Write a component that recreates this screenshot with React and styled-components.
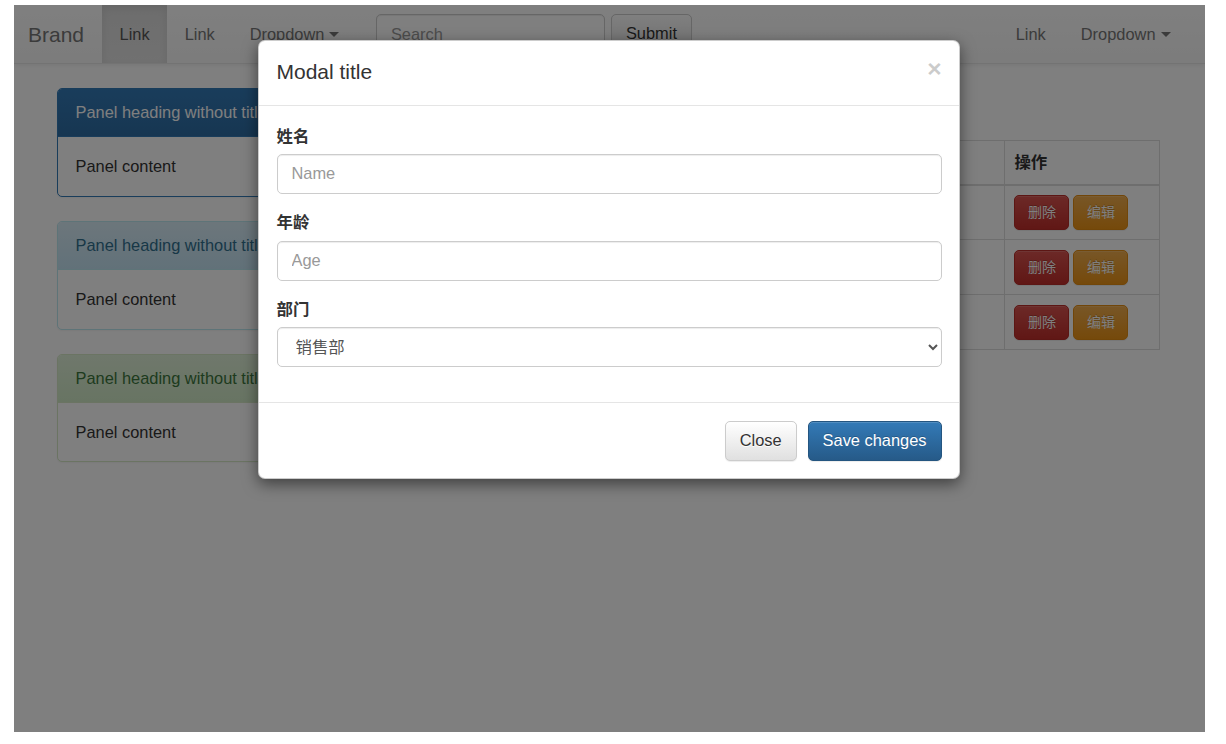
import React from 'react';
import styled, { createGlobalStyle, css } from 'styled-components';

const GlobalStyle = createGlobalStyle`
    html, body {
        margin: 0;
        padding: 0;
        background: #fff;
    }
    body {
        font-family: "Liberation Sans", "Noto Sans CJK SC", Arial, sans-serif;
        font-size: 16.4px;
        line-height: 23.4px;
        color: #333;
    }
    * {
        box-sizing: border-box;
    }
`;

const Screen = styled.div`
    position: relative;
    margin: 5px 0 0 14px;
    width: 1191px;
    height: 727px;
    overflow: hidden;
    background: #fff;
`;

const Navbar = styled.nav`
    display: flex;
    align-items: stretch;
    height: 59px;
    padding: 1px 17px 0 0;
    background-image: linear-gradient(to bottom, #fff 0, #f8f8f8 100%);
    border-bottom: 1px solid #e7e7e7;
    box-shadow: inset 0 1px 0 rgba(255, 255, 255, .15), 0 1px 5px rgba(0, 0, 0, .075);
`;

const Brand = styled.a`
    display: flex;
    align-items: center;
    padding: 0 18px 0 14px;
    font-size: 21px;
    color: #777;
    text-decoration: none;
`;

const NavList = styled.ul`
    display: flex;
    margin: -1px 0 0;
    padding: 0;
    list-style: none;
    ${props => props.right && css`
        margin-left: auto;
    `}
`;

const NavItem = styled.li`
    display: flex;
    align-items: center;
    padding: 1px 17.5px 0;
    color: #777;
    ${props => props.active && css`
        color: #555;
        background-image: linear-gradient(to bottom, #dbdbdb 0, #e2e2e2 100%);
        box-shadow: inset 0 3px 9px rgba(0, 0, 0, .075);
    `}
`;

const Caret = styled.span`
    display: inline-block;
    margin-left: 5px;
    border-top: 5px solid #777;
    border-left: 5px solid transparent;
    border-right: 5px solid transparent;
`;

const NavForm = styled.form`
    display: flex;
    align-items: flex-start;
    gap: 6px;
    margin-left: 19px;
    padding-top: 8px;
`;

const FormControl = styled.input`
    display: block;
    width: ${props => props.width || '100%'};
    height: 40px;
    padding: 7px 14px;
    font-family: inherit;
    font-size: 16.4px;
    line-height: 23.4px;
    color: #555;
    background: #fff;
    border: 1px solid #ccc;
    border-radius: 5px;
    box-shadow: inset 0 1px 1px rgba(0, 0, 0, .075);

    &::placeholder {
        color: #999;
    }
`;

const btnTones = {
    default: { from: '#fff', to: '#e0e0e0', border: '#ccc', color: '#333', shadow: '0 1px 0 #fff' },
    primary: { from: '#337ab7', to: '#265a88', border: '#245580', color: '#fff', shadow: '0 -1px 0 rgba(0,0,0,.2)' },
    danger: { from: '#d9534f', to: '#c12e2a', border: '#b92c28', color: '#fff', shadow: '0 -1px 0 rgba(0,0,0,.2)' },
    warning: { from: '#f0ad4e', to: '#eb9316', border: '#e38d13', color: '#fff', shadow: '0 -1px 0 rgba(0,0,0,.2)' },
};

const Btn = styled.button`
    display: inline-flex;
    align-items: center;
    justify-content: center;
    font-family: inherit;
    border-radius: 5px;
    cursor: pointer;
    white-space: nowrap;
    background-image: linear-gradient(to bottom, ${p => btnTones[p.tone].from} 0, ${p => btnTones[p.tone].to} 100%);
    border: 1px solid ${p => btnTones[p.tone].border};
    color: ${p => btnTones[p.tone].color};
    text-shadow: ${p => btnTones[p.tone].shadow};
    box-shadow: inset 0 1px 0 rgba(255, 255, 255, .15), 0 1px 1px rgba(0, 0, 0, .075);
    ${p => p.small ? css`
        padding: 6px 12.5px;
        font-size: 14px;
        line-height: 21px;
    ` : css`
        padding: 7px 14px;
        font-size: 16.4px;
        line-height: 23.4px;
    `}
`;

const Content = styled.main`
    display: flex;
    align-items: flex-start;
    padding: 24px 45px 0 43px;
`;

const PanelColumn = styled.div`
    width: 300px;
    flex-shrink: 0;
`;

const panelTones = {
    primary: { border: '#337ab7', from: '#337ab7', to: '#2e6da4', text: '#fff' },
    info: { border: '#bce8f1', from: '#d9edf7', to: '#c4e3f3', text: '#31708f' },
    success: { border: '#d6e9c6', from: '#dff0d8', to: '#d0e9c6', text: '#3c763d' },
};

const Panel = styled.div`
    margin-bottom: 24px;
    background: #fff;
    border: 1px solid ${p => panelTones[p.tone].border};
    border-radius: 5px;
    box-shadow: 0 1px 2px rgba(0, 0, 0, .05);
    overflow: hidden;
`;

const PanelHeading = styled.div`
    padding: 12px 17.5px;
    white-space: nowrap;
    color: ${p => panelTones[p.tone].text};
    background-image: linear-gradient(to bottom, ${p => panelTones[p.tone].from} 0, ${p => panelTones[p.tone].to} 100%);
    border-bottom: 1px solid ${p => panelTones[p.tone].border};
`;

const PanelBody = styled.div`
    padding: 17.5px;
`;

const TableColumn = styled.div`
    flex: 1;
    margin-left: 40px;
`;

const Toolbar = styled.div`
    margin-bottom: 13px;
`;

const Table = styled.table`
    width: 100%;
    border-collapse: collapse;
    border: 1px solid #ddd;

    th, td {
        padding: 9.4px;
        border: 1px solid #ddd;
        text-align: left;
        vertical-align: middle;
    }

    thead th {
        border-bottom-width: 2px;
    }
`;

const ActionCell = styled.td`
    width: 155px;
    white-space: nowrap;

    & > * + * {
        margin-left: 4px;
    }
`;

const Backdrop = styled.div`
    position: absolute;
    inset: 0;
    z-index: 1;
    background: rgba(0, 0, 0, .5);
`;

const ModalLayer = styled.div`
    position: absolute;
    inset: 0;
    z-index: 2;
`;

const Dialog = styled.div`
    width: 702px;
    margin: 35px 0 0 244px;
    background: #fff;
    border: 1px solid rgba(0, 0, 0, .2);
    border-radius: 7px;
    box-shadow: 0 5px 15px rgba(0, 0, 0, .5);
`;

const ModalHeader = styled.div`
    display: flex;
    justify-content: space-between;
    align-items: flex-start;
    padding: 16px 17.5px 17.5px;
    border-bottom: 1px solid #e5e5e5;
`;

const ModalTitle = styled.h4`
    margin: 0;
    font-size: 21px;
    font-weight: 500;
    line-height: 30px;
    color: #333;
`;

const CloseX = styled.button`
    margin-top: 0;
    padding: 0;
    background: none;
    border: 0;
    font-family: inherit;
    font-size: 24.6px;
    font-weight: bold;
    line-height: 1;
    color: #000;
    opacity: .2;
    text-shadow: 0 1px 0 #fff;
`;

const ModalBody = styled.div`
    padding: 19px 17.5px 17.5px;
`;

const FormGroup = styled.div`
    margin-bottom: 17.5px;
`;

const Label = styled.label`
    display: block;
    margin-bottom: 5.85px;
    font-weight: bold;
`;

const ModalFooter = styled.div`
    display: flex;
    justify-content: flex-end;
    gap: 11px;
    padding: 18px 17.5px 17.5px;
    border-top: 1px solid #e5e5e5;
`;

const panels = ['primary', 'info', 'success'];

const people = [
    { id: 1, name: '张三', age: 28, dept: '销售部' },
    { id: 2, name: '李四', age: 32, dept: '技术部' },
    { id: 3, name: '王五', age: 25, dept: '财务部' },
];

export default function App() {
    return (
        <>
            <GlobalStyle />
            <Screen>
                <Navbar>
                    <Brand href="#">Brand</Brand>
                    <NavList>
                        <NavItem active>Link</NavItem>
                        <NavItem>Link</NavItem>
                        <NavItem>Dropdown <Caret /></NavItem>
                    </NavList>
                    <NavForm>
                        <FormControl width="229px" placeholder="Search" />
                        <Btn tone="default" type="button">Submit</Btn>
                    </NavForm>
                    <NavList right>
                        <NavItem>Link</NavItem>
                        <NavItem>Dropdown <Caret /></NavItem>
                    </NavList>
                </Navbar>

                <Content>
                    <PanelColumn>
                        {panels.map(tone => (
                            <Panel key={tone} tone={tone}>
                                <PanelHeading tone={tone}>Panel heading without title</PanelHeading>
                                <PanelBody>Panel content</PanelBody>
                            </Panel>
                        ))}
                    </PanelColumn>
                    <TableColumn>
                        <Toolbar>
                            <Btn tone="primary" type="button">添加</Btn>
                        </Toolbar>
                        <Table>
                            <thead>
                                <tr>
                                    <th>序号</th>
                                    <th>姓名</th>
                                    <th>年龄</th>
                                    <th>部门</th>
                                    <th>操作</th>
                                </tr>
                            </thead>
                            <tbody>
                                {people.map(p => (
                                    <tr key={p.id}>
                                        <td>{p.id}</td>
                                        <td>{p.name}</td>
                                        <td>{p.age}</td>
                                        <td>{p.dept}</td>
                                        <ActionCell>
                                            <Btn tone="danger" small type="button">删除</Btn>
                                            <Btn tone="warning" small type="button">编辑</Btn>
                                        </ActionCell>
                                    </tr>
                                ))}
                            </tbody>
                        </Table>
                    </TableColumn>
                </Content>

                <Backdrop />
                <ModalLayer>
                    <Dialog>
                        <ModalHeader>
                            <ModalTitle>Modal title</ModalTitle>
                            <CloseX type="button">×</CloseX>
                        </ModalHeader>
                        <ModalBody>
                            <FormGroup>
                                <Label>姓名</Label>
                                <FormControl placeholder="Name" />
                            </FormGroup>
                            <FormGroup>
                                <Label>年龄</Label>
                                <FormControl placeholder="Age" />
                            </FormGroup>
                            <FormGroup>
                                <Label>部门</Label>
                                <FormControl as="select" defaultValue="销售部">
                                    <option>销售部</option>
                                    <option>技术部</option>
                                    <option>财务部</option>
                                </FormControl>
                            </FormGroup>
                        </ModalBody>
                        <ModalFooter>
                            <Btn tone="default" type="button">Close</Btn>
                            <Btn tone="primary" type="button">Save changes</Btn>
                        </ModalFooter>
                    </Dialog>
                </ModalLayer>
            </Screen>
        </>
    );
}
